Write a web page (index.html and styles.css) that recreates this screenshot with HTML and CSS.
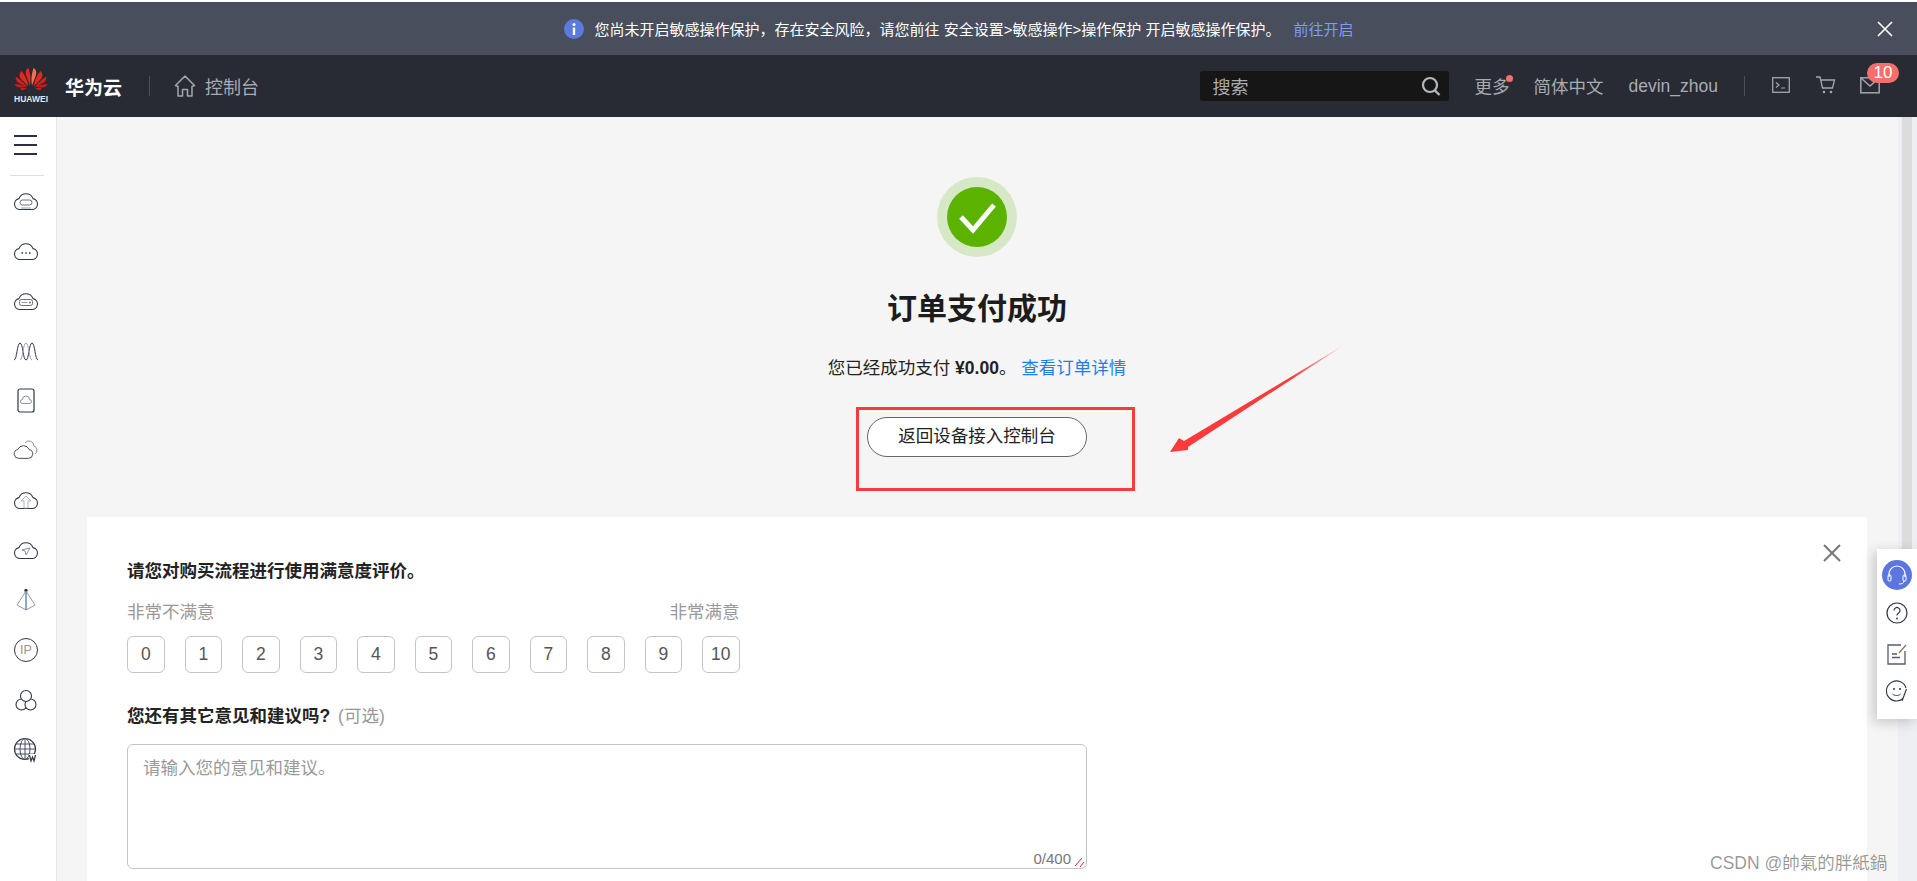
FILE: index.html
```html
<!DOCTYPE html>
<html lang="zh-CN">
<head>
    <meta charset="UTF-8">
    <title>订单支付成功</title>
    <link rel="stylesheet" href="styles.css">
</head>
<body>

<svg class="defs" width="0" height="0">
    <symbol id="cloud" viewBox="0 0 26 20">
        <path d="M7 18.500a5.500 5.500 0 0 1-1-10.900 7.500 7.500 0 0 1 14 0 5.500 5.500 0 0 1-1 10.900z" fill="none" stroke="#2f3645" stroke-width="1.100"/>
    </symbol>
</svg>

<!-- top notice -->
<div class="notice">
    <span></span>
    <div class="notice-text">
        <svg class="info" width="20" height="20" viewBox="0 0 20 20"><circle cx="10" cy="10" r="10" fill="#5b7ae0"/><rect x="8.800" y="8.500" width="2.400" height="7.500" fill="#fff"/><circle cx="10" cy="5.600" r="1.500" fill="#fff"/></svg>
        <span>您尚未开启敏感操作保护，存在安全风险，请您前往 安全设置&gt;敏感操作&gt;操作保护 开启敏感操作保护。</span>
        <a class="notice-link" href="#">前往开启</a>
    </div>
    <svg class="notice-close" width="16" height="16" viewBox="0 0 16 16"><path d="M1 1l14 14M15 1L1 15" stroke="#fff" stroke-width="1.600"/></svg>
</div>

<!-- header -->
<div class="header">
    <div class="logo">
        <svg width="34" height="25" viewBox="0 0 34 25">
            <g fill="#e3281f">
                <path d="M14.600 0c-2.400 1-3.400 4-2.600 7l4 10.500c.6-4 .8-8-.2-12.500z"/>
                <path d="M19.400 0c2.400 1 3.400 4 2.600 7l-4 10.500c-.6-4-.8-8 .2-12.500z" fill="#f0705a"/>
                <path d="M7.500 3C5.300 5 5 8 6.500 10.500l8 8c-1-5-3-11-7-15.500z"/>
                <path d="M26.500 3c2.200 2 2.500 5 1 7.500l-8 8c1-5 3-11 7-15.500z"/>
                <path d="M1.800 8.500C1.300 11.500 2.500 14 5 15l8.500 4.500C10 15 6 11 1.800 8.500z" fill="#d3201a"/>
                <path d="M32.200 8.500c.5 3-.7 5.500-3.200 6.500l-8.500 4.500c3.500-4.500 7.500-8.500 11.700-11z" fill="#d3201a"/>
                <path d="M.5 16c1 2.500 3.500 4 6 3.500l6-.5C9 17 4.500 16 .5 16z" fill="#c81c16"/>
                <path d="M33.500 16c-1 2.500-3.500 4-6 3.500l-6-.5c3.500-2 8-3 12-3z" fill="#c81c16"/>
                <path d="M7 22c2.500.5 4.500-.5 6-2H6.500z" fill="#c81c16"/>
                <path d="M27 22c-2.500.5-4.500-.5-6-2h6.500z" fill="#c81c16"/>
            </g>
        </svg>
        <span class="logo-word">HUAWEI</span>
    </div>
    <span class="brand">华为云</span>
    <span class="vline brand-line"></span>
    <svg class="home" width="22" height="24" viewBox="0 0 22 24"><path d="M1.500 11.500L11 2l9.500 9.500-2.500 1V22h-4.500v-6.500h-5V22H4V12.500z" fill="none" stroke="#a2a6ad" stroke-width="1.500" stroke-linejoin="round"/></svg>
    <span class="console">控制台</span>

    <div class="search">
        <span>搜索</span>
        <svg width="20" height="20" viewBox="0 0 20 20"><circle cx="9" cy="9" r="7" fill="none" stroke="#b4b7bb" stroke-width="2.200"/><path d="M13.500 14l5 5" stroke="#b4b7bb" stroke-width="2.400"/></svg>
    </div>
    <span class="nav more">更多</span>
    <span class="nav lang">简体中文</span>
    <span class="nav user">devin_zhou</span>
    <span class="vline user-line"></span>
    <svg class="tool term" width="18" height="18" viewBox="0 0 18 18"><rect x=".7" y="1.700" width="16.600" height="14.600" fill="none" stroke="#a2a6ad" stroke-width="1.300"/><path d="M4 6.500L7 9l-3 2.500M9 12h4" fill="none" stroke="#a2a6ad" stroke-width="1.200"/></svg>
    <svg class="tool cart" width="20" height="20" viewBox="0 0 20 20"><path d="M0 2h4l2.500 11h10L18.500 5H5" fill="none" stroke="#a2a6ad" stroke-width="1.300"/><circle cx="8" cy="17" r="1.300" fill="#a2a6ad"/><circle cx="15" cy="17" r="1.300" fill="#a2a6ad"/></svg>
    <div class="mail">
        <svg width="20" height="18" viewBox="0 0 20 18"><rect x=".8" y="1.800" width="18.400" height="15" fill="none" stroke="#a2a6ad" stroke-width="1.500"/><path d="M1 2l9 8 9-8" fill="none" stroke="#a2a6ad" stroke-width="1.500"/></svg>
        <span class="badge">10</span>
    </div>
</div>

<div class="body-row">
    <!-- left icon rail -->
    <div class="rail">
        <div class="burger"><i></i><i></i><i></i></div>
        <div class="rail-line"></div>
        <div class="rail-icons">
            <svg width="26" height="24" viewBox="0 0 26 24"><use href="#cloud" y="2" width="26" height="20"/><rect x="7" y="11" width="12" height="5" rx="2.500" fill="none" stroke="#6a7080"/><path d="M8 19h10" stroke="#9a9fab"/></svg>
            <svg width="26" height="24" viewBox="0 0 26 24"><use href="#cloud" y="2" width="26" height="20"/><path d="M8.500 14h1.500M12.300 14h1.500M16 14h1.500" stroke="#2f3645" stroke-width="1.400"/></svg>
            <svg width="26" height="24" viewBox="0 0 26 24"><use href="#cloud" y="2" width="26" height="20"/><rect x="6.500" y="10.500" width="13" height="6" rx="2" fill="none" stroke="#6a7080"/><path d="M8.500 13.500h6" stroke="#9a9fab"/><circle cx="17" cy="13.500" r="1" fill="#6a7080"/></svg>
            <svg width="26" height="24" viewBox="0 0 26 24"><path d="M1 21C4 21 4 4 7 4S10 21 13 21 16 4 19 4 22 21 25 21" fill="none" stroke="#2f3645"/><path d="M7 21C10 21 10 4 13 4S16 21 19 21" fill="none" stroke="#9a9fab"/></svg>
            <svg width="26" height="26" viewBox="0 0 26 26"><rect x="5" y="1" width="16" height="23" rx="2" fill="none" stroke="#2f3645" stroke-width="1.200"/><path d="M9.500 15.500a2 2 0 0 1 0-4 3.500 3.500 0 0 1 7 0 2 2 0 0 1 0 4z" fill="none" stroke="#7d8391" stroke-width=".9"/><path d="M7 23.500h12" stroke="#9a9fab"/></svg>
            <svg width="26" height="24" viewBox="0 0 26 24"><use href="#cloud" y="5" width="21" height="17"/><path d="M12 5a5 5 0 0 1 9 3 4.500 4.500 0 0 1 1 8" fill="none" stroke="#8b909c"/></svg>
            <svg width="26" height="24" viewBox="0 0 26 24"><use href="#cloud" y="2" width="26" height="20"/><path d="M13 8l-5 5h3v7h4v-7h3z" fill="none" stroke="#a9adb7" stroke-width=".9"/></svg>
            <svg width="26" height="24" viewBox="0 0 26 24"><use href="#cloud" y="2" width="26" height="20"/><path d="M9 12l8-2-4 7-1-4z" fill="none" stroke="#7d8391" stroke-width=".9"/></svg>
            <svg width="26" height="26" viewBox="0 0 26 26"><circle cx="13" cy="3.500" r="1.700" fill="#2f3645"/><path d="M13 4L4 18l9 5 9-5zM13 4v19" fill="none" stroke="#8a8f9b" stroke-width=".9"/><path d="M13 4v19" stroke="#4e7fc0"/></svg>
            <div class="ip-icon">IP</div>
            <svg width="26" height="24" viewBox="0 0 26 24"><circle cx="8.500" cy="16.500" r="5.500" fill="#fff" stroke="#2f3645" stroke-width="1.100"/><circle cx="17.500" cy="16.500" r="5.500" fill="#fff" stroke="#2f3645" stroke-width="1.100"/><circle cx="13" cy="8" r="5.500" fill="#fff" stroke="#2f3645" stroke-width="1.100"/></svg>
            <svg width="26" height="26" viewBox="0 0 26 26"><circle cx="12" cy="12" r="10.500" fill="none" stroke="#2f3645" stroke-width="1.200"/><ellipse cx="12" cy="12" rx="5" ry="10.500" fill="none" stroke="#4a5060"/><path d="M12 1.500v21M1.500 12h21M3 7h18M3 17h18" stroke="#4a5060"/><rect x="16" y="17" width="9" height="8" fill="#fff"/><path d="M16.500 18l1.500 6 1.500-4 1.500 4 1.500-6" fill="none" stroke="#2f3645" stroke-width="1.200"/></svg>
        </div>
    </div>

    <div class="content">
        <div class="hero">
            <svg class="ok" width="80" height="80" viewBox="0 0 80 80"><circle cx="40" cy="40" r="40" fill="#d7e8c6"/><circle cx="40" cy="40" r="30" fill="#5bb300"/><path d="M24 40l12 13 21-25" fill="none" stroke="#fff" stroke-width="5"/></svg>
            <h1 class="title">订单支付成功</h1>
            <p class="paid">您已经成功支付 <b>¥0.00</b>。 <a href="#">查看订单详情</a></p>
            <a class="back-btn" href="#">返回设备接入控制台</a>
        </div>

        <div class="card">
            <svg class="card-close" width="18" height="18" viewBox="0 0 18 18"><path d="M1 1l16 16M17 1L1 17" stroke="#777" stroke-width="2"/></svg>
            <div class="q-title">请您对购买流程进行使用满意度评价。</div>
            <div class="scale-labels"><span>非常不满意</span><span>非常满意</span></div>
            <div class="scale">
                <span>0</span><span>1</span><span>2</span><span>3</span><span>4</span><span>5</span><span>6</span><span>7</span><span>8</span><span>9</span><span>10</span>
            </div>
            <div class="q-title q-second">您还有其它意见和建议吗? <em>(可选)</em></div>
            <div class="box-wrap">
                <textarea class="box" placeholder="请输入您的意见和建议。"></textarea>
                <span class="count">0/400</span>
                <svg class="grip" width="9" height="9" viewBox="0 0 9 9"><path d="M0 8l7-8M5 9l4-5" stroke="#d0202e"/></svg>
            </div>
        </div>
    </div>

    <div class="scroll"><div class="thumb"></div></div>
</div>

<!-- floating help panel -->
<div class="help">
    <div class="help-top"><svg width="24" height="24" viewBox="0 0 24 24"><path d="M4 14V11a8 8 0 0 1 16 0v3" fill="none" stroke="#fff" stroke-width="1.200"/><rect x="3" y="12" width="3" height="6" rx="1" fill="none" stroke="#fff"/><rect x="18" y="12" width="3" height="6" rx="1" fill="none" stroke="#fff"/><path d="M19 18c0 2.500-2.500 3-5 3" fill="none" stroke="#fff"/></svg></div>
    <svg width="22" height="22" viewBox="0 0 22 22"><circle cx="11" cy="11" r="10" fill="none" stroke="#2f3645" stroke-width="1.200"/><path d="M8 8.500a3 3 0 1 1 4.500 2.600c-1 .6-1.500 1.200-1.500 2.400" fill="none" stroke="#2f3645" stroke-width="1.200"/><circle cx="11" cy="16.500" r=".9" fill="#2f3645"/></svg>
    <svg class="help-note" width="22" height="22" viewBox="0 0 22 22"><path d="M15 2H2v19h17V8" fill="none" stroke="#555c6a" stroke-width="1.300"/><path d="M13 10l7-8" stroke="#8a6d4a" stroke-width="1.200"/><path d="M6 11h5M6 14.500h8" stroke="#555c6a" stroke-width="1.300"/></svg>
    <svg width="22" height="22" viewBox="0 0 22 22"><path d="M17 18.500A10 10 0 1 1 20 8" fill="none" stroke="#2f3645" stroke-width="1.100"/><path d="M20.500 9L16 21" stroke="#2f3645" stroke-width="1.100"/><circle cx="8" cy="9" r="1" fill="#2f3645"/><circle cx="14" cy="9" r="1" fill="#2f3645"/><path d="M6.500 14c2 2 6 2 8 0" fill="none" stroke="#2f3645"/></svg>
</div>

<!-- red markup drawn over the screenshot -->
<div class="mark-box"></div>
<svg class="mark-arrow" width="180" height="112" viewBox="0 0 180 112">
    <defs><linearGradient id="fade" x1="0" y1="1" x2="1" y2="0"><stop offset=".7" stop-color="#fb3b3b"/><stop offset="1" stop-color="#fbc0c0"/></linearGradient></defs>
    <polygon points="3,109 12,95 17,98 177,2 21,104 21,107" fill="url(#fade)"/>
</svg>
<div class="watermark">CSDN @帥氣的胖紙鍋</div>

</body>
</html>
```

FILE: styles.css
```css
* {
    box-sizing: border-box;
}
html, body {
    margin: 0;
    height: 881px;
    overflow: hidden;
}
body {
    display: flex;
    flex-direction: column;
    padding-top: 2px;
    background: #fff;
    font-family: "Liberation Sans", "Noto Sans CJK SC", sans-serif;
    font-size: 17.5px;
    color: #222;
}
a {
    text-decoration: none;
}
.defs {
    position: absolute;
}

/* notice */
.notice {
    display: grid;
    grid-template-columns: 1fr auto 1fr;
    align-items: center;
    height: 53px;
    flex: none;
    padding: 0 24px;
    background: #484e5c;
    color: #fff;
    font-size: 15px;
}
.notice-text {
    display: flex;
    align-items: center;
}
.info {
    margin-right: 11px;
}
.notice-link {
    margin-left: 13px;
    color: #7f9df2;
}
.notice-close {
    justify-self: end;
}

/* header */
.header {
    display: flex;
    align-items: center;
    height: 62px;
    flex: none;
    background: #282b33;
    color: #a9acb2;
}
.logo {
    display: flex;
    flex-direction: column;
    align-items: center;
    width: 34px;
    margin-left: 14px;
}
.logo-word {
    margin-top: 1px;
    font-size: 8.5px;
    font-weight: bold;
    line-height: 10px;
    color: #e4e4e4;
}
.brand {
    margin-left: 17px;
    font-size: 19px;
    font-weight: bold;
    color: #fff;
}
.vline {
    width: 1px;
    height: 20px;
    background: #4c4f57;
}
.brand-line {
    margin-left: 27px;
}
.home {
    margin-left: 24px;
}
.console {
    margin-left: 9px;
    font-size: 18px;
}
.search {
    display: flex;
    align-items: center;
    justify-content: space-between;
    width: 249px;
    height: 30px;
    margin-left: auto;
    padding: 0 8px 0 12px;
    border-radius: 3px;
    background: #161616;
    font-size: 18px;
}
.nav {
    position: relative;
    font-size: 17.500px;
    line-height: 24px;
}
.more {
    margin-left: 25px;
    margin-top: 2px;
}
.more::after {
    content: "";
    position: absolute;
    right: -4px;
    top: 0;
    width: 7px;
    height: 7px;
    border-radius: 50%;
    background: #f66f6a;
}
.lang {
    margin-left: 24px;
    margin-top: 2px;
}
.user {
    margin-left: 25px;
    margin-top: -1px;
}
.user-line {
    margin-left: 26px;
}
.tool {
    margin-top: -2px;
}
.term {
    margin-left: 27px;
}
.cart {
    margin-left: 26px;
}
.mail {
    position: relative;
    width: 20px;
    height: 18px;
    margin: -2px 37px 0 24px;
}
.badge {
    position: absolute;
    left: 7px;
    top: -13px;
    width: 32px;
    height: 20px;
    border-radius: 10px;
    background: #f66f6a;
    color: #fff;
    font-size: 17px;
    line-height: 20px;
    text-align: center;
}

/* page row */
.body-row {
    display: flex;
    flex: 1;
    min-height: 0;
}
.rail {
    width: 57px;
    flex: none;
    border-right: 1px solid #e4e5e8;
    background: #fff;
}
.burger {
    display: flex;
    flex-direction: column;
    gap: 7px;
    width: 23px;
    margin: 18px 0 0 14px;
}
.burger i {
    height: 2px;
    background: #2b3040;
}
.rail-line {
    width: 34px;
    height: 1px;
    margin: 20px 0 0 10px;
    background: #dedede;
}
.rail-icons {
    display: flex;
    flex-direction: column;
    align-items: center;
    margin-top: 12px;
    padding-right: 4px;
}
.rail-icons > * {
    flex: none;
    height: 26px;
    margin-bottom: 23.900px;
}
.ip-icon {
    width: 24px;
    height: 24px !important;
    margin: 1px 0 25px !important;
    border: 1px solid #2f3645;
    border-radius: 50%;
    color: #a58c8c;
    font-size: 12.500px;
    line-height: 22px;
    text-align: center;
}
.content {
    display: flex;
    flex-direction: column;
    flex: 1;
    min-width: 0;
    padding: 0 31px 0 30px;
    background: #f5f5f5;
}
.hero {
    display: flex;
    flex-direction: column;
    align-items: center;
    flex: none;
    padding-top: 60px;
}
.title {
    margin: 32px 0 0;
    font-size: 30px;
    line-height: 40px;
    color: #1c1c1c;
}
.paid {
    margin: 27px 0 0;
    line-height: 24px;
    white-space: pre-wrap;
}
.paid a {
    color: #1f7df0;
}
.back-btn {
    width: 220px;
    height: 40px;
    margin-top: 37px;
    border: 1px solid #666;
    border-radius: 20px;
    background: #fff;
    color: #222;
    line-height: 37px;
    text-align: center;
}

/* survey card */
.card {
    position: relative;
    flex: 1;
    margin-top: 60px;
    padding: 42px 40px 0;
    background: #fff;
}
.card-close {
    position: absolute;
    right: 26px;
    top: 27px;
}
.q-title {
    font-weight: bold;
    line-height: 24px;
    color: #222;
}
.q-title em {
    margin-left: 3px;
    font-style: normal;
    font-weight: normal;
    color: #999;
}
.q-second {
    margin-top: 31px;
}
.scale-labels {
    display: flex;
    justify-content: space-between;
    width: 612.500px;
    margin-top: 17px;
    line-height: 24px;
    color: #999;
}
.scale {
    display: flex;
    gap: 20px;
    margin-top: 12px;
}
.scale span {
    width: 37.500px;
    height: 37px;
    border: 1px solid #c4c4c4;
    border-radius: 6px;
    color: #555;
    line-height: 35px;
    text-align: center;
}
.box-wrap {
    position: relative;
    width: 960px;
    margin-top: 16px;
}
.box {
    display: block;
    width: 100%;
    height: 125px;
    padding: 11px 15px;
    border: 1px solid #c4c4c4;
    border-radius: 6px;
    outline: none;
    resize: none;
    font: inherit;
    line-height: 24px;
}
.box::placeholder {
    color: #999;
    opacity: 1;
}
.count {
    position: absolute;
    right: 16px;
    bottom: 1px;
    color: #777;
    font-size: 15px;
    line-height: 18px;
}
.grip {
    position: absolute;
    right: 3px;
    bottom: 2px;
}
.scroll {
    width: 19px;
    flex: none;
    background: #eeeff3;
}
.thumb {
    width: 10px;
    height: 520px;
    margin-left: 4px;
    background: #dcdcdc;
}

/* floating help panel */
.help {
    position: absolute;
    left: 1877px;
    top: 549px;
    display: flex;
    flex-direction: column;
    align-items: center;
    gap: 15px;
    width: 40px;
    height: 170px;
    padding: 11px 0 0;
    background: #fff;
    box-shadow: -3px 3px 12px rgba(0, 0, 0, .2);
}
.help-top {
    display: flex;
    align-items: center;
    justify-content: center;
    width: 30px;
    height: 30px;
    margin-bottom: -3px;
    border-radius: 50%;
    background: #5b76e0;
}
.help-note {
    margin-top: 4px;
}

/* red markup */
.mark-box {
    position: absolute;
    left: 856px;
    top: 407px;
    width: 279px;
    height: 84px;
    border: 3px solid #fb3b3b;
}
.mark-arrow {
    position: absolute;
    left: 1167px;
    top: 343px;
}
.watermark {
    position: absolute;
    left: 1710px;
    top: 852px;
    color: rgba(0, 0, 0, .42);
    font-size: 17.500px;
    line-height: 22px;
    text-shadow: 0 0 1px #fff;
    white-space: nowrap;
}
```
